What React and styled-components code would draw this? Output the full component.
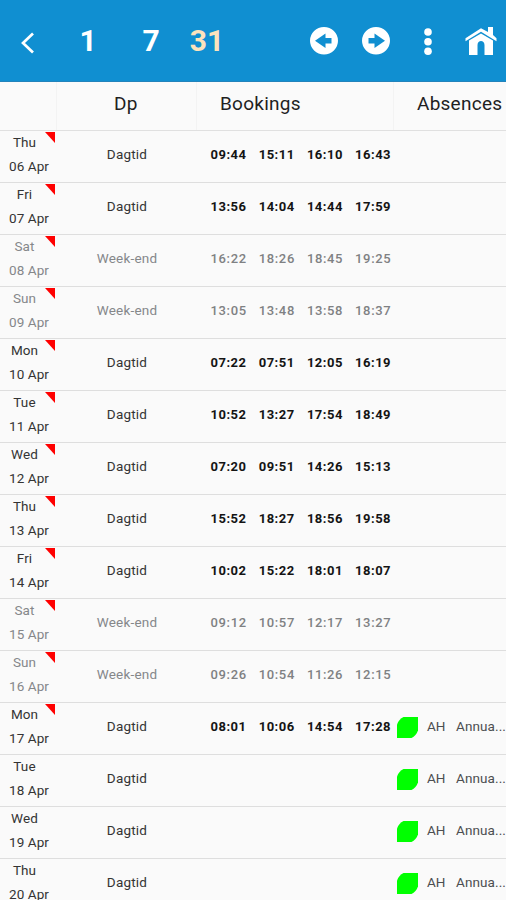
import React from "react";
import styled, { createGlobalStyle } from "styled-components";

const GlobalStyle = createGlobalStyle`
  * { box-sizing: border-box; }
  body { margin: 0; background: #fafafa; overflow: hidden; }
`;

const COLUMNS = "57px 140px 197px 112px";

const Screen = styled.main`
  width: 506px;
  height: 900px;
  overflow: hidden;
  background: #fafafa;
  color: #303030;
  font-family: Roboto, "Liberation Sans", sans-serif;
`;

const Toolbar = styled.header`
  display: flex;
  align-items: center;
  justify-content: space-between;
  height: 82px;
  padding: 0 9px 0 20px;
  background: #108fd1;
  border-bottom: 1px solid #2383bb;
  color: #fff;
`;

const Group = styled.div`
  display: flex;
  align-items: center;
`;

const BackIcon = styled.svg`
  width: 15px;
  height: 22px;
  margin-top: 4px;
`;

const RangeButton = styled.button`
  width: ${(p) => p.$width}px;
  padding: 0;
  border: 0;
  background: none;
  color: ${(p) => (p.$active ? "#fce3bd" : "#fff")};
  font: 700 30px/36px Roboto, sans-serif;
  text-align: center;
`;

const ActionIcon = styled.svg`
  width: ${(p) => p.$width}px;
  height: 28px;
  margin-left: ${(p) => p.$gap}px;
  fill: #fff;
`;

const TableHead = styled.div`
  display: grid;
  grid-template-columns: ${COLUMNS};
  height: 49px;
  border-bottom: 1px solid #e0e0e0;
`;

const HeadCell = styled.div`
  padding: 10px 0 0 ${(p) => p.$indent || 0}px;
  border-right: 1px solid ${(p) => (p.$last ? "transparent" : "#f3f3f3")};
  color: #1f1f1f;
  font-size: 19px;
  line-height: 24px;
  letter-spacing: 0.25px;
  white-space: nowrap;
`;

const Row = styled.div`
  display: grid;
  grid-template-columns: ${COLUMNS};
  height: 52px;
  border-bottom: 1px solid #dedede;
  color: ${(p) => (p.$weekend ? "#85878a" : "#343434")};
  font-size: 13.5px;
`;

const DateCell = styled.div`
  position: relative;
  line-height: 24px;
  letter-spacing: 0.1px;
`;

const DateLines = styled.div`
  margin-top: -1px;
`;

const DayName = styled.div`
  width: 49px;
  text-align: center;
`;

const DayDate = styled.div`
  width: 58px;
  text-align: center;
`;

const Flag = styled.i`
  position: absolute;
  top: 1px;
  left: 45px;
  width: 10px;
  height: 11px;
  background: #ff0000;
  clip-path: polygon(0 0, 100% 0, 100% 100%);
`;

const PlanCell = styled.div`
  line-height: 47px;
  letter-spacing: 0.2px;
  text-align: center;
`;

const Bookings = styled.div`
  display: grid;
  grid-template-columns: repeat(4, 48.2px);
  padding-left: 13.5px;
  color: ${(p) => (p.$weekend ? "#7f8183" : "#141414")};
  font-size: 13px;
  font-weight: ${(p) => (p.$weekend ? 500 : 700)};
  line-height: 47px;
  letter-spacing: ${(p) => (p.$weekend ? 0.65 : 0.5)}px;
`;

const AbsenceCell = styled.div`
  display: flex;
  align-items: center;
  height: 47px;
  padding-left: 3px;
  color: #4c4e50;
  line-height: 47px;
  white-space: nowrap;
`;

const Leaf = styled.svg`
  flex: none;
  width: 21px;
  height: 21px;
  margin-top: 2px;
  fill: #00ff00;
`;

const Code = styled.span`
  width: 30px;
  margin-left: 9px;
`;

const Reason = styled.span`
  letter-spacing: 0.1px;
`;

const days = [
  ["Thu", "06 Apr", "09:44 15:11 16:10 16:43"],
  ["Fri", "07 Apr", "13:56 14:04 14:44 17:59"],
  ["Sat", "08 Apr", "16:22 18:26 18:45 19:25"],
  ["Sun", "09 Apr", "13:05 13:48 13:58 18:37"],
  ["Mon", "10 Apr", "07:22 07:51 12:05 16:19"],
  ["Tue", "11 Apr", "10:52 13:27 17:54 18:49"],
  ["Wed", "12 Apr", "07:20 09:51 14:26 15:13"],
  ["Thu", "13 Apr", "15:52 18:27 18:56 19:58"],
  ["Fri", "14 Apr", "10:02 15:22 18:01 18:07"],
  ["Sat", "15 Apr", "09:12 10:57 12:17 13:27"],
  ["Sun", "16 Apr", "09:26 10:54 11:26 12:15"],
  ["Mon", "17 Apr", "08:01 10:06 14:54 17:28", true],
  ["Tue", "18 Apr", "", true],
  ["Wed", "19 Apr", "", true],
  ["Thu", "20 Apr", "", true],
];

function DayRow({ day, date, times, absent }) {
  const weekend = day === "Sat" || day === "Sun";
  return (
    <Row $weekend={weekend}>
      <DateCell>
        <DateLines>
          <DayName>{day}</DayName>
          <DayDate>{date}</DayDate>
        </DateLines>
        {times && <Flag />}
      </DateCell>
      <PlanCell>{weekend ? "Week-end" : "Dagtid"}</PlanCell>
      <Bookings $weekend={weekend}>
        {times && times.split(" ").map((time) => <span key={time}>{time}</span>)}
      </Bookings>
      <AbsenceCell>
        {absent && (
          <>
            <Leaf viewBox="0 0 21 21">
              <path d="M6.5 0H21v13.5q-2 5.5-6.5 7.5H0V7.500Q2 2 6.500 0Z" />
            </Leaf>
            <Code>AH</Code>
            <Reason>Annua...</Reason>
          </>
        )}
      </AbsenceCell>
    </Row>
  );
}

export default function App() {
  return (
    <Screen>
      <GlobalStyle />
      <Toolbar>
        <Group>
          <BackIcon viewBox="0 0 15 22" aria-label="Back">
            <path d="M13 1.5 3 11l10 9.5" fill="none" stroke="#fff" strokeWidth="2.7" />
          </BackIcon>
          <RangeButton $width={106}>1</RangeButton>
          <RangeButton $width={20}>7</RangeButton>
          <RangeButton $width={92} $active>31</RangeButton>
        </Group>
        <Group>
          <ActionIcon $width={28} $gap={0} viewBox="0 0 28 28" aria-label="Previous">
            <path fillRule="evenodd" d="M14 0a14 13.7 0 1 1 0 27.4A14 13.7 0 1 1 14 0ZM5 13.8 15.5 6.500v4.500H21.500v5.500h-6v4.500Z" />
          </ActionIcon>
          <ActionIcon $width={28} $gap={24} viewBox="0 0 28 28" aria-label="Next">
            <path fillRule="evenodd" d="M14 0a14 13.7 0 1 1 0 27.4A14 13.7 0 1 1 14 0ZM23 13.8 12.5 6.500v4.500H6.500v5.500h6v4.500Z" />
          </ActionIcon>
          <ActionIcon $width={8} $gap={34} viewBox="0 0 8 28" aria-label="More">
            <circle cx="4" cy="5" r="3.8" />
            <circle cx="4" cy="14.7" r="3.8" />
            <circle cx="4" cy="24.2" r="3.8" />
          </ActionIcon>
          <ActionIcon $width={32} $gap={33} viewBox="0 0 32 28" aria-label="Home">
            <path d="M16 1.2 23 5V0h5v8l3.500 3.200v3.100L16 4.700.500 14.300v-3.100Z" />
            <path d="M16 6.500 28 13.500v14.500h-8.500V18c0-5.500-7-5.500-7 0v10H4V13.500Z" />
          </ActionIcon>
        </Group>
      </Toolbar>
      <TableHead>
        <HeadCell />
        <HeadCell $indent={57}>Dp</HeadCell>
        <HeadCell $indent={23}>Bookings</HeadCell>
        <HeadCell $indent={23} $last>Absences</HeadCell>
      </TableHead>
      {days.map(([day, date, times, absent]) => (
        <DayRow key={date} day={day} date={date} times={times} absent={absent} />
      ))}
    </Screen>
  );
}
